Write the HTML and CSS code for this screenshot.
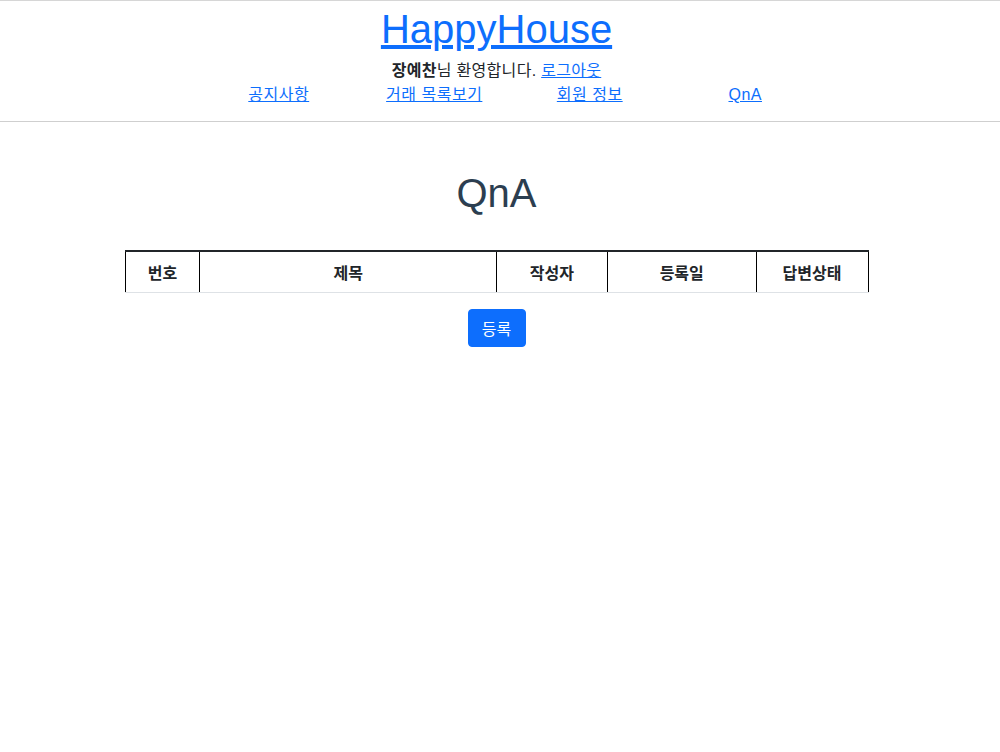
FILE: index.html
```html
<!DOCTYPE html>
<html lang="ko">
<head>
<meta charset="utf-8">
<title>HappyHouse</title>
<link rel="stylesheet" href="styles.css">
</head>
<body>
<header class="site-header">
  <div class="wrap">
    <h1 class="brand"><a href="#">HappyHouse</a></h1>
    <div class="welcome"><strong>장예찬</strong>님 환영합니다. <a href="#">로그아웃</a></div>
    <nav class="nav">
      <a href="#">공지사항</a>
      <a href="#">거래 목록보기</a>
      <a href="#">회원 정보</a>
      <a href="#">QnA</a>
    </nav>
  </div>
</header>
<main class="wrap content">
  <h2 class="page-title">QnA</h2>
  <table class="qna-table">
    <thead>
      <tr>
        <th class="c-no">번호</th>
        <th class="c-title">제목</th>
        <th class="c-writer">작성자</th>
        <th class="c-date">등록일</th>
        <th class="c-state">답변상태</th>
      </tr>
    </thead>
    <tbody></tbody>
  </table>
  <button class="btn-primary" type="button">등록</button>
</main>
</body>
</html>
```
FILE: styles.css
```css
* { box-sizing: border-box; }
body {
  margin: 0;
  font-family: "Liberation Sans", Arial, "Noto Sans CJK KR", sans-serif;
  font-size: 16px;
  color: #212529;
  background: #fff;
}
a { color: #0d6efd; text-decoration: underline; }
.wrap { width: 993px; }
.site-header {
  border-top: 1px solid #d6d6d6;
  border-bottom: 1px solid #cfcfcf;
  text-align: center;
  padding: 4px 0 14px;
}
.brand {
  margin: 0;
  font-size: 40px;
  font-weight: 400;
  line-height: 48px;
}
.welcome {
  margin-top: 6px;
  line-height: 24px;
  letter-spacing: 0.3px;
}
.welcome strong { font-weight: 700; }
.nav {
  display: grid;
  grid-template-columns: repeat(4, 155.5px);
  margin-left: 201px;
  line-height: 24px;
}
.nav a { letter-spacing: 0.5px; }
.content {
  display: flex;
  flex-direction: column;
  align-items: center;
}
.page-title {
  margin: 47px 0 0;
  font-size: 40px;
  font-weight: 400;
  color: #2c3e50;
  line-height: 48px;
}
.qna-table {
  margin-top: 33px;
  width: 744px;
  border-collapse: collapse;
  border-top: 2px solid #212529;
}
.qna-table th {
  height: 41px;
  border-left: 1px solid #000;
  border-right: 1px solid #000;
  border-bottom: 1px solid #dee2e6;
  font-weight: 700;
  text-align: center;
  vertical-align: middle;
  padding: 0;
}
.c-no { width: 75px; }
.c-title { width: 297px; }
.c-writer { width: 111px; }
.c-date { width: 149px; }
.c-state { width: 112px; }
.btn-primary {
  margin-top: 16px;
  width: 58px;
  height: 38px;
  background: #0d6efd;
  color: #fff;
  border: 1px solid #0d6efd;
  border-radius: 4px;
  font-family: inherit;
  font-size: 16px;
  padding: 0;
}
```
